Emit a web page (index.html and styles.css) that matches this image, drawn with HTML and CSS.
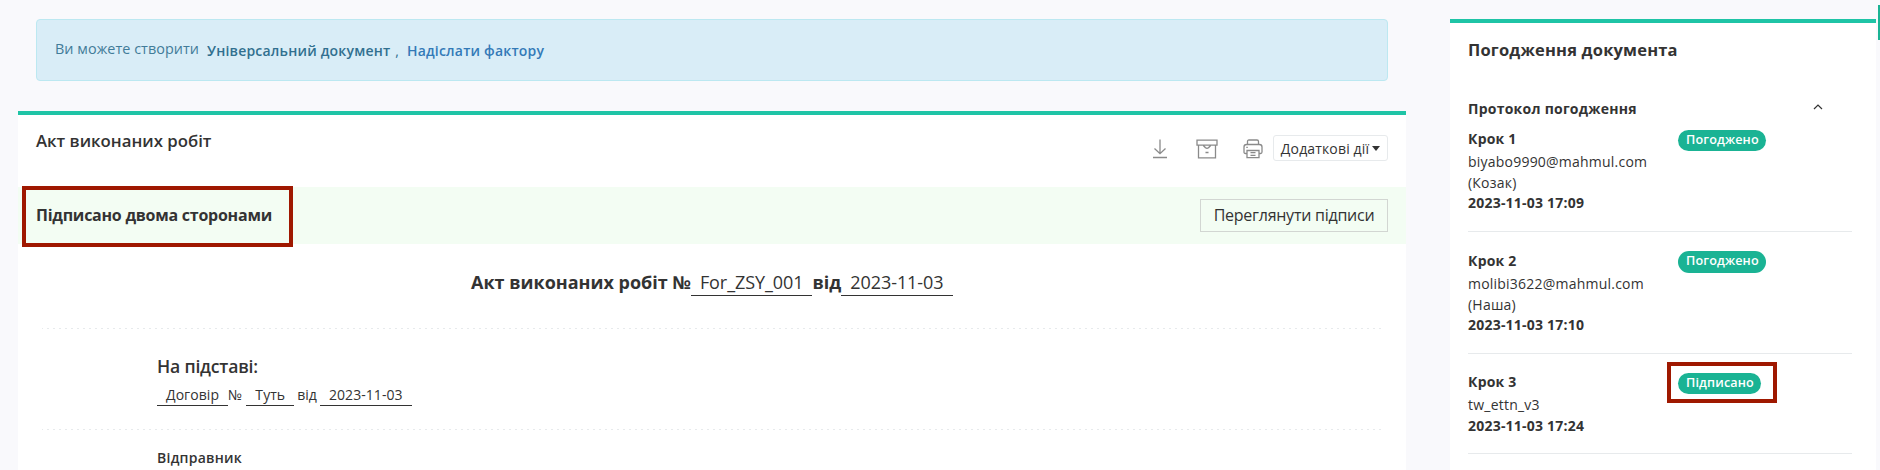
FILE: index.html
```html
<!DOCTYPE html>
<html lang="uk">
<head>
<meta charset="utf-8">
<title>Акт виконаних робіт</title>
<link rel="stylesheet" href="styles.css">
</head>
<body>
<div class="page">
  <main class="main">
    <div class="notice">
      <span class="notice-text">Ви можете створити</span>
      <a class="notice-link dark">Універсальний документ</a><span class="notice-comma">,</span>
      <a class="notice-link">Надіслати фактору</a>
    </div>
    <section class="doc">
      <header class="doc-head">
        <h1 class="doc-name">Акт виконаних робіт</h1>
        <div class="tools">
          <svg class="icon" width="20" height="20" viewBox="0 0 20 20"><path d="M10 .5v14M4.500 9.500l5.500 5.200 5.500-5.200M3 18.500h14"/></svg>
          <svg class="icon" width="22" height="20" viewBox="0 0 22 20"><path d="M1 1.200h20v5H1zM2.500 6.200v12.600h17V6.200M7.500 6.500c.2 1.300 1.500 1 1.900 2.300q1.600.9 3.200 0c.4-1.300 1.700-1 1.900-2.300M9.500 13.500h3"/></svg>
          <svg class="icon" width="20" height="20" viewBox="0 0 20 20"><path d="M4.500 5V2.500Q4.500 1 6 1h8q1.500 0 1.500 1.500V5M4 14.500H2.500Q1 14.500 1 13V8q0-2.500 2.500-2.500h13Q19 5.500 19 8v5q0 1.500-1.500 1.500H16M4 11.500h12v7.200H4zM7.500 13.700h5M7.500 16.300h5M3.300 8.300h1.500"/></svg>
          <button class="more">Додаткові дії<span class="caret"></span></button>
        </div>
      </header>
      <div class="status">
        <strong class="status-text">Підписано двома сторонами</strong>
        <button class="view">Переглянути підписи</button>
        <div class="mark mark-status"></div>
      </div>
      <div class="title"><b>Акт виконаних робіт №</b><span class="field">For_ZSY_001</span><b class="from">від</b><span class="field">2023-11-03</span></div>
      <svg class="dash" width="1340" height="1"><line x1="0" y1=".5" x2="1340" y2=".5"/></svg>
      <div class="basis">
        <h2 class="basis-name">На підставі:</h2>
        <div class="basis-row"><span class="field">Договір</span><span class="num">№</span><span class="field">Туть</span><span class="of">від</span><span class="field">2023-11-03</span></div>
      </div>
      <svg class="dash" width="1340" height="1"><line x1="0" y1=".5" x2="1340" y2=".5"/></svg>
      <div class="sender">Відправник</div>
    </section>
  </main>
  <aside class="side">
    <h2 class="side-name">Погодження документа</h2>
    <div class="protocol"><span>Протокол погодження</span><svg class="chev" width="10" height="6" viewBox="0 0 10 6"><path d="M1 5l4-4 4 4"/></svg></div>
    <div class="step first">
      <div class="info"><b class="step-no">Крок 1</b><span>biyabo9990@mahmul.com</span><span>(Козак)</span><b>2023-11-03 17:09</b></div>
      <div class="state"><span class="badge">Погоджено</span></div>
    </div>
    <div class="step">
      <div class="info"><b class="step-no">Крок 2</b><span>molibi3622@mahmul.com</span><span>(Наша)</span><b>2023-11-03 17:10</b></div>
      <div class="state"><span class="badge tall">Погоджено</span></div>
    </div>
    <div class="step last">
      <div class="info"><b class="step-no">Крок 3</b><span>tw_ettn_v3</span><b>2023-11-03 17:24</b></div>
      <div class="state"><span class="badge">Підписано</span><div class="mark mark-badge"></div></div>
    </div>
  </aside>
  <div class="edge"></div>
</div>
</body>
</html>
```
FILE: styles.css
```css
* { box-sizing: border-box; }
body { margin: 0; background: #f9f9fc; color: #333; font: 14px/20px "Open Sans", "Noto Sans", sans-serif; }
h1, h2 { margin: 0; }
b, strong { font-weight: 700; }
button { font-family: inherit; color: #333; padding: 0; }
.page { position: relative; display: flex; gap: 44px; height: 470px; padding: 19px 4px 0 18px; overflow: hidden; }
.main { width: 1388px; flex: none; }
.notice { display: flex; height: 62px; margin: 0 18px 30px; padding: 19px 18px 0; background: #d9edf7; border: 1px solid #bce8f1; border-radius: 4px; color: #31708f; }
.notice-text { margin-right: 8px; opacity: .9; font-size: 14.400px; letter-spacing: .05px; }
.notice-link { font-weight: 600; color: #337ab7; padding-top: 2px; letter-spacing: .2px; }
.notice-link.dark { color: #31708f; }
.notice-comma { padding-top: 2px; margin: 0 8px 0 5px; }
.doc { height: 400px; background: #fff; border-top: 4px solid #1fc4a6; }
.doc-head { display: flex; justify-content: space-between; height: 72px; padding: 16px 18px 0; }
.doc-name { font-size: 16.800px; line-height: 20px; font-weight: 600; }
.tools { display: flex; align-items: flex-start; padding-top: 4px; }
.icon { margin: 4px 26px 0 0; fill: none; stroke: #8a8a8a; stroke-width: 1.300; }
.icon:nth-child(2) { margin-right: 25px; }
.icon:nth-child(3) { margin-right: 10px; }
.more { display: flex; align-items: center; justify-content: center; gap: 3px; width: 115px; height: 26px; background: #fff; border: 1px solid #e7eaec; border-radius: 3px; font-size: 14px; letter-spacing: .15px; }
.caret { border: 4.500px solid transparent; border-top: 5px solid #333; border-bottom: 0; }
.status { position: relative; display: flex; justify-content: space-between; align-items: flex-start; height: 57px; padding: 12px 18px 0; background: #f3fdf3; }
.status-text { font-size: 16px; line-height: 32px; letter-spacing: -.25px; }
.view { width: 188px; height: 33px; padding-bottom: 2px; border: 1px solid #d2d6d2; background: none; font-size: 16px; letter-spacing: -.25px; }
.mark { position: absolute; border: 4px solid #9f1800; }
.mark-status { left: 4px; top: -1px; width: 271px; height: 61px; }
.mark-badge { left: -11px; top: -10px; width: 110px; height: 41px; }
.title { display: flex; margin: 25px 0 32px 453px; font-size: 18px; line-height: 26px; height: 27px; }
.field { border-bottom: 1px solid #333; padding: 0 9px; }
.title .field { height: 27px; letter-spacing: -.07px; }
.dash { display: block; margin-left: 24px; stroke: #e7eaec; stroke-dasharray: 2 4; stroke-dashoffset: 1; }
.basis { height: 100px; padding: 26px 0 0 139px; }
.basis-name { font-size: 17.600px; line-height: 22px; font-weight: 600; letter-spacing: -.2px; }
.basis-row { display: flex; margin-top: 8px; letter-spacing: .06px; }
.basis-row .field { height: 21px; }
.num { margin: 0 4px 0 0; }
.of { margin: 0 3px 0 3px; }
.sender { margin: 18px 0 0 139px; font-weight: 600; letter-spacing: .25px; }
.side { width: 426px; flex: none; background: #fff; border-top: 4px solid #1fc4a6; padding: 16px 24px 0 18px; height: 460px; }
.side-name { font-size: 16.500px; line-height: 22px; font-weight: 700; letter-spacing: .18px; }
.protocol { display: flex; justify-content: space-between; height: 20px; margin: 38px 29px 10px 0; font-weight: 700; letter-spacing: .25px; }
.chev { margin-top: 5px; fill: none; stroke: #333; stroke-width: 1.200; }
.step { display: flex; height: 122px; padding-top: 19px; border-bottom: 1px solid #e7eaec; }
.step.first { height: 103px; padding-top: 0; }
.step.last { height: 100px; padding-top: 18px; }
.info { display: flex; flex-direction: column; width: 210px; line-height: 20.500px; letter-spacing: .22px; }
.step-no { height: 23px; line-height: 19px; }
.state { position: relative; }
.badge { display: block; margin-top: 1px; height: 21px; line-height: 20px; padding: 0 7.500px 0 8px; border-radius: 11px; background: #1ab394; color: #fff; font-size: 12.600px; font-weight: 600; letter-spacing: .15px; }
.badge.tall { margin-top: 0; height: 22px; }
.edge { position: absolute; right: 0; top: 5px; width: 2px; height: 35px; background: #1ab394; }
```
